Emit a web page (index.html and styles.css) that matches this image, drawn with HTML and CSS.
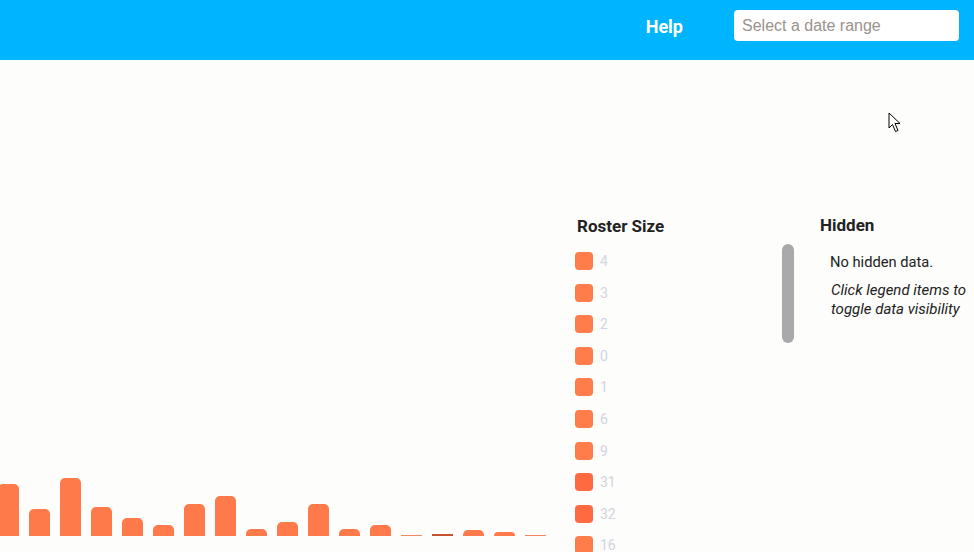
FILE: index.html
```html
<html>
<head>
    <link rel="stylesheet" href="styles.css">
</head>
<body>

    <header class="topbar">
        <a class="help-link" href="#">Help</a>
        <input class="date-range" type="text" placeholder="Select a date range">
    </header>

    <main class="dashboard">
        <!-- bar chart, heights in px -->
        <section class="chart">
            <div class="bars">
                <div class="bar" style="height: 52px"></div>
                <div class="bar" style="height: 27px"></div>
                <div class="bar" style="height: 58px"></div>
                <div class="bar" style="height: 29px"></div>
                <div class="bar" style="height: 18px"></div>
                <div class="bar" style="height: 11px"></div>
                <div class="bar" style="height: 32px"></div>
                <div class="bar" style="height: 40px"></div>
                <div class="bar" style="height: 7px"></div>
                <div class="bar" style="height: 14px"></div>
                <div class="bar" style="height: 32px"></div>
                <div class="bar" style="height: 7px"></div>
                <div class="bar" style="height: 11px"></div>
                <div class="bar bar-flat" style="height: 1px"></div>
                <div class="bar bar-flat bar-dark" style="height: 2px"></div>
                <div class="bar" style="height: 6px"></div>
                <div class="bar" style="height: 4px"></div>
                <div class="bar bar-flat" style="height: 1px"></div>
            </div>
        </section>

        <aside class="legend">
            <h3 class="panel-title">Roster Size</h3>
            <div class="legend-body">
                <ul class="legend-list">
                    <li class="legend-item"><span class="swatch"></span>4</li>
                    <li class="legend-item"><span class="swatch"></span>3</li>
                    <li class="legend-item"><span class="swatch"></span>2</li>
                    <li class="legend-item"><span class="swatch"></span>0</li>
                    <li class="legend-item"><span class="swatch"></span>1</li>
                    <li class="legend-item"><span class="swatch"></span>6</li>
                    <li class="legend-item"><span class="swatch"></span>9</li>
                    <li class="legend-item"><span class="swatch swatch-red"></span>31</li>
                    <li class="legend-item"><span class="swatch swatch-red"></span>32</li>
                    <li class="legend-item"><span class="swatch"></span>16</li>
                </ul>
                <div class="scroll-thumb"></div>
            </div>
        </aside>

        <aside class="hidden-panel">
            <h3 class="panel-title">Hidden</h3>
            <p class="hidden-empty">No hidden data.</p>
            <p class="hidden-hint">Click legend items to toggle data visibility</p>
        </aside>
    </main>

    <!-- mouse pointer -->
    <svg class="pointer" width="14" height="22" viewBox="0 0 14 22">
        <path d="M1 1 L1 16 L4.5 12.5 L7.5 19.5 L10 18.5 L7 11.5 L12 11.5 Z" fill="#fff" stroke="#000" stroke-width="1" stroke-linejoin="round"/>
    </svg>

</body>
</html>
```

FILE: styles.css
```css
body {
    margin: 0;
    background-color: #fdfdfb;
    font-family: Roboto, 'Liberation Sans', sans-serif;
    overflow: hidden;
    height: 552px;
}
.topbar {
    height: 60px;
    box-sizing: border-box;
    background-color: #00b5fd;
    display: flex;
    align-items: center;
    justify-content: flex-end;
    padding: 0 15px 9px 0;
}
.help-link {
    color: #fff;
    font-weight: 700;
    font-size: 18px;
    text-decoration: none;
    margin-right: 51px;
    margin-top: 1px;
}
.date-range {
    width: 225px;
    height: 31px;
    box-sizing: border-box;
    border: none;
    border-radius: 4px;
    background-color: #fff;
    padding: 0 8px;
    font-family: 'Liberation Sans', Arial, sans-serif;
    font-size: 16px;
}
.date-range::placeholder {
    color: #9a928c;
}
.dashboard {
    height: 492px;
    display: flex;
    overflow: hidden;
}
.chart {
    width: 575px;
    display: flex;
    align-items: flex-end;
    padding-bottom: 16px;
    box-sizing: border-box;
}
.bars {
    display: flex;
    align-items: flex-end;
    gap: 10px;
    margin-left: -2px;
}
.bar {
    width: 21px;
    background-color: #ff7a4a;
    border-radius: 5px 5px 0 0;
}
.bar-flat {
    border-radius: 0;
    background-color: #f08a64;
}
.bar-dark {
    background-color: #c4532f;
}
.legend {
    width: 245px;
    padding-top: 156px;
}
.panel-title {
    margin: 0;
    font-size: 17px;
    line-height: 20px;
    font-weight: 700;
    color: #222;
}
.legend .panel-title {
    margin-left: 2px;
}
.legend-body {
    display: flex;
    margin-top: 8px;
}
.legend-list {
    list-style: none;
    margin: 0;
    padding: 8px 0 0 0;
    width: 207px;
}
.legend-item {
    display: flex;
    align-items: center;
    height: 18px;
    margin-bottom: 13.6px;
    font-size: 14px;
    color: #d2d4de;
}
.swatch {
    width: 18px;
    height: 18px;
    border-radius: 4px;
    background-color: #ff7c4b;
    margin-right: 7px;
}
.swatch-red {
    background-color: #ff6a41;
}
.scroll-thumb {
    width: 12px;
    height: 99px;
    border-radius: 6px;
    background-color: #a9a9ab;
}
.hidden-panel {
    flex: 1;
    padding-top: 155px;
}
.hidden-empty {
    margin: 18px 0 0 10px;
    font-size: 14.7px;
    line-height: 19px;
    color: #222;
}
.hidden-hint {
    margin: 9px 0 0 11px;
    font-size: 15px;
    line-height: 19px;
    font-style: italic;
    color: #222;
}
.pointer {
    position: absolute;
    left: 888px;
    top: 112px;
}
```
